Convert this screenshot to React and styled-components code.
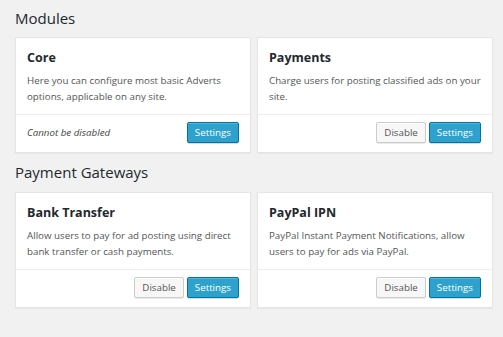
import React from "react";
import styled, { createGlobalStyle } from "styled-components";

const Global = createGlobalStyle`
  html, body { margin: 0; padding: 0; background: #f1f1f1; }
  body { font-family: "Open Sans", "Noto Sans", sans-serif; color: #444; }
`;

const Page = styled.div`
  padding: 7.5px 10px 20px 15px;
`;

const Section = styled.section`
  & + & { margin-top: 9px; }
`;

const Heading = styled.h2`
  margin: 0 0 9.5px;
  font-size: 15px;
  line-height: 20px;
  font-weight: 400;
  color: #23282d;
`;

const Grid = styled.div`
  display: grid;
  grid-template-columns: 236px 236px;
  gap: 6px;
`;

const Card = styled.div`
  display: flex;
  flex-direction: column;
  background: #fff;
  border: 1px solid #e5e5e5;
  box-shadow: 0 1px 1px rgba(0, 0, 0, 0.04);
`;

const Body = styled.div`
  padding: 12px 11px 9px;
  flex: 1;
`;

const Title = styled.h3`
  margin: 0 0 7px;
  font-size: 12.5px;
  line-height: 16px;
  font-weight: 700;
  color: #23282d;
`;

const Desc = styled.p`
  margin: 0;
  font-size: 9.75px;
  line-height: 16px;
  color: #555;
`;

const Footer = styled.div`
  display: flex;
  align-items: center;
  gap: 3px;
  padding: 7px 11px 9px;
  border-top: 1px solid #eee;
`;

const Note = styled.span`
  font-size: 9.75px;
  font-style: italic;
  color: #444;
  margin-right: auto;
`;

const Button = styled.button`
  height: 21px;
  padding: 0 7px;
  font-family: "Open Sans", "Noto Sans", sans-serif;
  font-size: 9.75px;
  line-height: 19px;
  border-radius: 2px;
  cursor: pointer;
  border: 1px solid ${(p) => (p.$primary ? "#0074a2" : "#ccc")};
  background: ${(p) => (p.$primary ? "#2ea2cc" : "#f7f7f7")};
  color: ${(p) => (p.$primary ? "#fff" : "#555")};
  box-shadow: ${(p) =>
    p.$primary
      ? "inset 0 1px 0 rgba(120, 200, 230, 0.5), 0 1px 0 rgba(0, 0, 0, 0.15)"
      : "inset 0 1px 0 #fff, 0 1px 0 rgba(0, 0, 0, 0.08)"};
`;

const Spacer = styled.span`
  margin-left: auto;
`;

const sections = [
  {
    name: "Modules",
    items: [
      {
        title: "Core",
        desc: "Here you can configure most basic Adverts options, applicable on any site.",
        locked: true,
      },
      {
        title: "Payments",
        desc: "Charge users for posting classified ads on your site.",
      },
    ],
  },
  {
    name: "Payment Gateways",
    items: [
      {
        title: "Bank Transfer",
        desc: "Allow users to pay for ad posting using direct bank transfer or cash payments.",
      },
      {
        title: "PayPal IPN",
        desc: "PayPal Instant Payment Notifications, allow users to pay for ads via PayPal.",
      },
    ],
  },
];

export default function App() {
  return (
    <Page>
      <Global />
      {sections.map((s) => (
        <Section key={s.name}>
          <Heading>{s.name}</Heading>
          <Grid>
            {s.items.map((it) => (
              <Card key={it.title}>
                <Body>
                  <Title>{it.title}</Title>
                  <Desc>{it.desc}</Desc>
                </Body>
                <Footer>
                  {it.locked ? (
                    <Note>Cannot be disabled</Note>
                  ) : (
                    <>
                      <Spacer />
                      <Button>Disable</Button>
                    </>
                  )}
                  <Button $primary>Settings</Button>
                </Footer>
              </Card>
            ))}
          </Grid>
        </Section>
      ))}
    </Page>
  );
}
